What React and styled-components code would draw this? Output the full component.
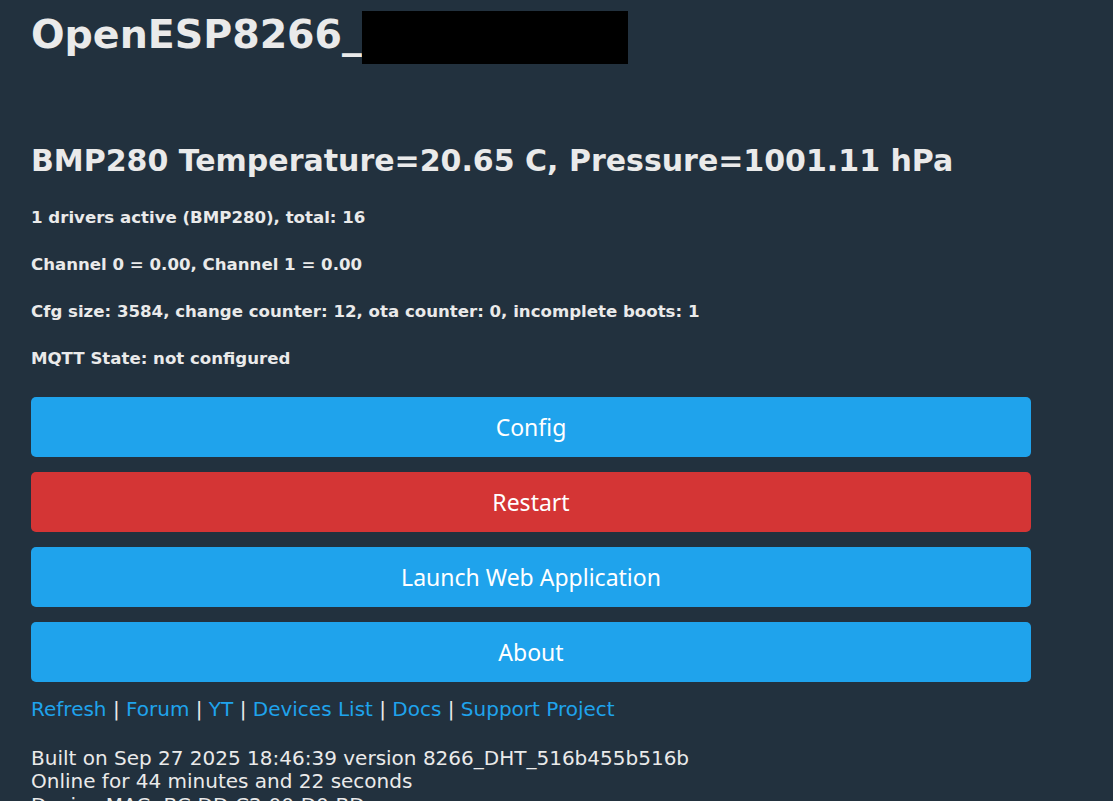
import styled, { createGlobalStyle } from 'styled-components';

const GlobalStyle = createGlobalStyle`
  html, body {
    margin: 0;
    padding: 0;
    background: #22313e;
  }
  body {
    font-family: "DejaVu Sans", Verdana, sans-serif;
    font-size: 20px;
    color: #eaeaea;
    overflow: hidden;
  }
`;

const Page = styled.div`
  padding: 11px 31px 0 31px;
  width: 1000px;
`;

const Title = styled.h1`
  font-size: 39.5px;
  font-weight: bold;
  margin: 0 0 79px 0;
  display: flex;
  align-items: flex-start;
  line-height: 46px;
`;

const Redacted = styled.span`
  display: inline-block;
  width: 266px;
  height: 53px;
  background: #000;
`;

const Reading = styled.h2`
  font-size: 30px;
  font-weight: bold;
  margin: 0 0 30px 0;
`;

const Info = styled.h5`
  font-size: 16.6px;
  font-weight: bold;
  margin: 0 0 28px 0;
`;

const Buttons = styled.div`
  display: flex;
  flex-direction: column;
  gap: 15px;
  padding-top: 1px;
`;

const Button = styled.button`
  width: 1000px;
  height: 60px;
  border: 0;
  border-radius: 5px;
  background: ${(p) => (p.$danger ? '#d43535' : '#1fa3ec')};
  color: #fff;
  font-family: "Noto Sans", sans-serif;
  font-size: 23px;
  cursor: pointer;
`;

const Links = styled.div`
  margin-top: 12px;
  line-height: 30px;
`;

const Link = styled.a`
  color: #1fa3ec;
  text-decoration: none;
`;

const Footer = styled.div`
  margin-top: 23px;
  line-height: 23.4px;
`;

const links = ['Refresh', 'Forum', 'YT', 'Devices List', 'Docs', 'Support Project'];

export default function App() {
  return (
    <>
      <GlobalStyle />
      <Page>
        <Title>
          OpenESP8266_<Redacted />
        </Title>
        <Reading>BMP280 Temperature=20.65 C, Pressure=1001.11 hPa</Reading>
        <Info>1 drivers active (BMP280), total: 16</Info>
        <Info>Channel 0 = 0.00, Channel 1 = 0.00</Info>
        <Info>Cfg size: 3584, change counter: 12, ota counter: 0, incomplete boots: 1</Info>
        <Info>MQTT State: not configured</Info>
        <Buttons>
          <Button>Config</Button>
          <Button $danger>Restart</Button>
          <Button>Launch Web Application</Button>
          <Button>About</Button>
        </Buttons>
        <Links>
          {links.map((l, i) => (
            <span key={l}>
              {i > 0 && ' | '}
              <Link href="#">{l}</Link>
            </span>
          ))}
        </Links>
        <Footer>
          Built on Sep 27 2025 18:46:39 version 8266_DHT_516b455b516b
          <br />
          Online for 44 minutes and 22 seconds
          <br />
          Device MAC: BC:DD:C2:00:D0:BD
        </Footer>
      </Page>
    </>
  );
}
